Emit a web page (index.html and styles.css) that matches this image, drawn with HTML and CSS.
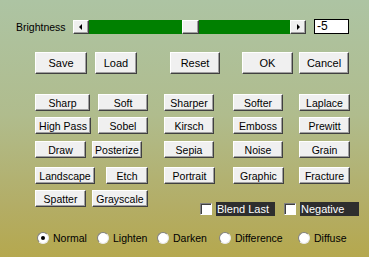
FILE: index.html
```html
<!DOCTYPE html>
<html lang="en">
<head>
  <meta charset="UTF-8">
  <title>Brightness Filter</title>
  <link rel="stylesheet" href="styles.css">
</head>
<body>

  <div class="dialog">

    <!-- slider -->
    <div class="slider-row">
      <span class="slider-label">Brightness</span>
      <div class="scroll">
        <span class="win-btn arrow"><i class="tri tri-left"></i></span>
        <div class="track"><span class="win-btn thumb"></span></div>
        <span class="win-btn arrow"><i class="tri tri-right"></i></span>
      </div>
      <div class="value">-5</div>
    </div>

    <!-- main actions -->
    <div class="action-row">
      <button class="win-btn b-save">Save</button>
      <button class="win-btn b-load">Load</button>
      <button class="win-btn b-reset">Reset</button>
      <button class="win-btn b-ok">OK</button>
      <button class="win-btn b-cancel">Cancel</button>
    </div>

    <!-- filters -->
    <div class="filters">
      <button class="win-btn w55">Sharp</button>
      <button class="win-btn w50 ml6">Soft</button>
      <button class="win-btn w50">Sharper</button>
      <button class="win-btn w50">Softer</button>
      <button class="win-btn w51">Laplace</button>

      <button class="win-btn w56">High Pass</button>
      <button class="win-btn w50 ml6">Sobel</button>
      <button class="win-btn w50">Kirsch</button>
      <button class="win-btn w50">Emboss</button>
      <button class="win-btn w51">Prewitt</button>

      <button class="win-btn w51">Draw</button>
      <button class="win-btn w50">Posterize</button>
      <button class="win-btn w50">Sepia</button>
      <button class="win-btn w50">Noise</button>
      <button class="win-btn w51">Grain</button>

      <button class="win-btn w60">Landscape</button>
      <button class="win-btn w42 ml14">Etch</button>
      <button class="win-btn w51">Portrait</button>
      <button class="win-btn w51">Graphic</button>
      <button class="win-btn w51">Fracture</button>

      <button class="win-btn w51">Spatter</button>
      <button class="win-btn w56">Grayscale</button>
      <div class="checks">
        <label class="check"><span class="box"></span><span class="check-text t-blend">Blend Last</span></label>
        <label class="check"><span class="box"></span><span class="check-text t-neg">Negative</span></label>
      </div>
    </div>

    <!-- blend modes -->
    <div class="radios">
      <label class="radio r-normal"><span class="dot on"></span>Normal</label>
      <label class="radio r-lighten"><span class="dot"></span>Lighten</label>
      <label class="radio r-darken"><span class="dot"></span>Darken</label>
      <label class="radio r-diff"><span class="dot"></span>Difference</label>
      <label class="radio"><span class="dot"></span>Diffuse</label>
    </div>

  </div>

</body>
</html>
```

FILE: styles.css
```css
body {
  margin: 0;
  font-family: "Liberation Sans", Arial, sans-serif;
  font-size: 10.5px;
  color: #000;
}

.dialog {
  width: 369px;
  height: 257px;
  box-sizing: border-box;
  padding-top: 19px;
  background: linear-gradient(#adc4a3 0%, #b0bc8d 45%, #b3ad66 80%, #b5a84e 100%);
  overflow: hidden;
}

/* windows classic raised button */
.win-btn {
  box-sizing: border-box;
  display: flex;
  align-items: center;
  justify-content: center;
  padding: 0;
  margin: 0;
  font: inherit;
  color: #000;
  background: #f0f0f0;
  border: 1px solid;
  border-color: #fff #404040 #404040 #fff;
  box-shadow: inset -1px -1px #a0a0a0;
  white-space: nowrap;
}

/* slider */
.slider-row {
  display: flex;
  align-items: center;
  height: 15px;
  padding-left: 16px;
}
.slider-label { width: 57px; }
.scroll {
  display: flex;
  width: 233px;
  height: 14px;
}
.arrow { width: 16px; height: 14px; }
.track {
  flex: 1;
  display: flex;
  background: #008000;
}
.thumb { width: 17px; height: 14px; margin-left: 93px; }
.tri {
  width: 0;
  height: 0;
  border-top: 3px solid transparent;
  border-bottom: 3px solid transparent;
}
.tri-left { border-right: 3px solid #000; margin-left: -1px; }
.tri-right { border-left: 3px solid #000; margin-left: 1px; }
.value {
  box-sizing: border-box;
  width: 35px;
  height: 15px;
  margin-left: 8px;
  padding-left: 2px;
  line-height: 13px;
  font-size: 12px;
  background: #fff;
  border: 1px solid #000;
}

/* actions */
.action-row {
  display: flex;
  margin-top: 18px;
  padding-left: 35px;
}
.action-row .win-btn { height: 22px; font-size: 11px; }
.b-save { width: 52px; }
.b-load { width: 42px; margin-left: 8px; }
.b-reset { width: 50px; margin-left: 33px; }
.b-ok { width: 51px; margin-left: 22px; }
.b-cancel { width: 50px; margin-left: 6px; }

/* filter grid */
.filters {
  display: grid;
  grid-template-columns: 57px 72px 69px 66px 51px;
  grid-template-rows: 23px 24px 26px 23px 25px;
  margin-top: 20px;
  padding-left: 35px;
}
.filters .win-btn { height: 17px; align-self: start; }
.w42 { width: 42px; }
.w50 { width: 50px; }
.w51 { width: 51px; }
.w55 { width: 55px; }
.w56 { width: 56px; }
.w60 { width: 60px; }
.ml6 { margin-left: 6px !important; }
.ml14 { margin-left: 14px !important; }

.checks {
  grid-column: 3 / 6;
  display: flex;
  align-items: center;
  margin-top: 12px;
  margin-left: 36px;
  height: 14px;
}
.check { display: flex; align-items: center; }
.box {
  box-sizing: border-box;
  width: 12px;
  height: 12px;
  background: #fff;
  border: 1px solid;
  border-color: #808080 #fff #fff #808080;
  box-shadow: inset 1px 1px #404040;
}
.check-text {
  margin-left: 4px;
  height: 14px;
  line-height: 14px;
  padding-left: 1px;
  color: #fff;
  background: #2e2e2e;
  font-size: 11px;
}
.t-blend { width: 58px; margin-right: 9px; }
.t-neg { width: 58px; }

/* radios */
.radios {
  display: flex;
  align-items: center;
  margin-top: 17px;
  padding-left: 37px;
  height: 12px;
}
.radio { display: flex; align-items: center; gap: 4px; }
.r-normal, .r-lighten { width: 60px; }
.r-darken { width: 62px; }
.r-diff { width: 79px; }
.dot {
  box-sizing: border-box;
  display: flex;
  align-items: center;
  justify-content: center;
  width: 12px;
  height: 12px;
  border-radius: 50%;
  background: #fff;
  border: 1px solid;
  border-color: #808080 #e8e8e8 #e8e8e8 #808080;
}
.dot.on::after {
  content: "";
  width: 4px;
  height: 4px;
  border-radius: 50%;
  background: #000;
}
```
